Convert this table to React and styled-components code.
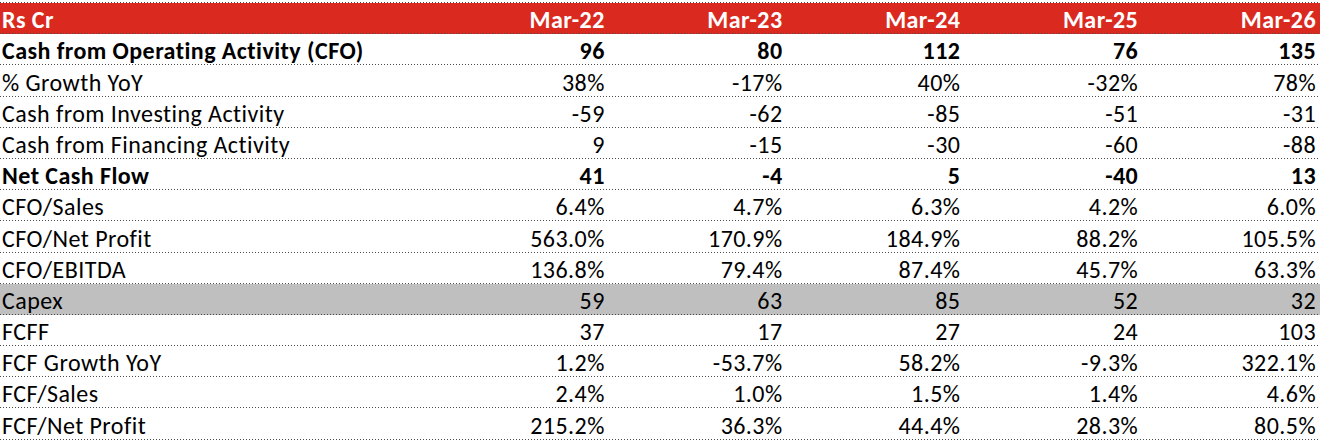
import styled, { createGlobalStyle } from 'styled-components';

const GlobalStyle = createGlobalStyle`
  html, body {
    margin: 0;
    padding: 0;
    background: #ffffff;
  }
  body {
    font-family: Carlito, Lato, 'Liberation Sans', sans-serif;
    color: #000000;
  }
`;

const dots = `linear-gradient(to right, #4a4a4a 0 1px, transparent 1px 3px)`;

const Table = styled.div`
  margin-top: 2px;
  width: 1320px;
  background-image: ${dots};
  background-size: 3px 1px;
  background-repeat: repeat-x;
  background-position: left top;
  padding-top: 1px;
`;

const Row = styled.div`
  display: grid;
  grid-template-columns: 431px repeat(5, 1fr);
  height: 31.2px;
  box-sizing: border-box;
  align-items: end;
  padding-bottom: 2px;
  font-size: 24px;
  letter-spacing: 0.45px;
  line-height: 1;
  font-weight: ${({ $bold }) => ($bold ? 700 : 400)};
  color: ${({ $header }) => ($header ? '#ffffff' : '#000000')};
  background-color: ${({ $header, $shaded }) =>
    $header ? '#da2a1f' : $shaded ? '#bfbfbf' : 'transparent'};
  background-image: ${dots};
  background-size: 3px 1px;
  background-repeat: repeat-x;
  background-position: left bottom;
`;

const Label = styled.div`
  padding-left: 2px;
  white-space: nowrap;
`;

const Value = styled.div`
  text-align: right;
  padding-right: 4px;
  white-space: nowrap;
`;

const years = ['Mar-22', 'Mar-23', 'Mar-24', 'Mar-25', 'Mar-26'];

const rows = [
  { label: 'Cash from Operating Activity (CFO)', bold: true, values: ['96', '80', '112', '76', '135'] },
  { label: '% Growth YoY', values: ['38%', '-17%', '40%', '-32%', '78%'] },
  { label: 'Cash from Investing Activity', values: ['-59', '-62', '-85', '-51', '-31'] },
  { label: 'Cash from Financing Activity', values: ['9', '-15', '-30', '-60', '-88'] },
  { label: 'Net Cash Flow', bold: true, values: ['41', '-4', '5', '-40', '13'] },
  { label: 'CFO/Sales', values: ['6.4%', '4.7%', '6.3%', '4.2%', '6.0%'] },
  { label: 'CFO/Net Profit', values: ['563.0%', '170.9%', '184.9%', '88.2%', '105.5%'] },
  { label: 'CFO/EBITDA', values: ['136.8%', '79.4%', '87.4%', '45.7%', '63.3%'] },
  { label: 'Capex', shaded: true, values: ['59', '63', '85', '52', '32'] },
  { label: 'FCFF', values: ['37', '17', '27', '24', '103'] },
  { label: 'FCF Growth YoY', values: ['1.2%', '-53.7%', '58.2%', '-9.3%', '322.1%'] },
  { label: 'FCF/Sales', values: ['2.4%', '1.0%', '1.5%', '1.4%', '4.6%'] },
  { label: 'FCF/Net Profit', values: ['215.2%', '36.3%', '44.4%', '28.3%', '80.5%'] },
];

export default function App() {
  return (
    <>
      <GlobalStyle />
      <Table role="table">
        <Row role="row" $header $bold>
          <Label>Rs Cr</Label>
          {years.map((year) => (
            <Value key={year}>{year}</Value>
          ))}
        </Row>
        {rows.map((row) => (
          <Row role="row" key={row.label} $bold={row.bold} $shaded={row.shaded}>
            <Label>{row.label}</Label>
            {row.values.map((value, i) => (
              <Value key={years[i]}>{value}</Value>
            ))}
          </Row>
        ))}
      </Table>
    </>
  );
}
